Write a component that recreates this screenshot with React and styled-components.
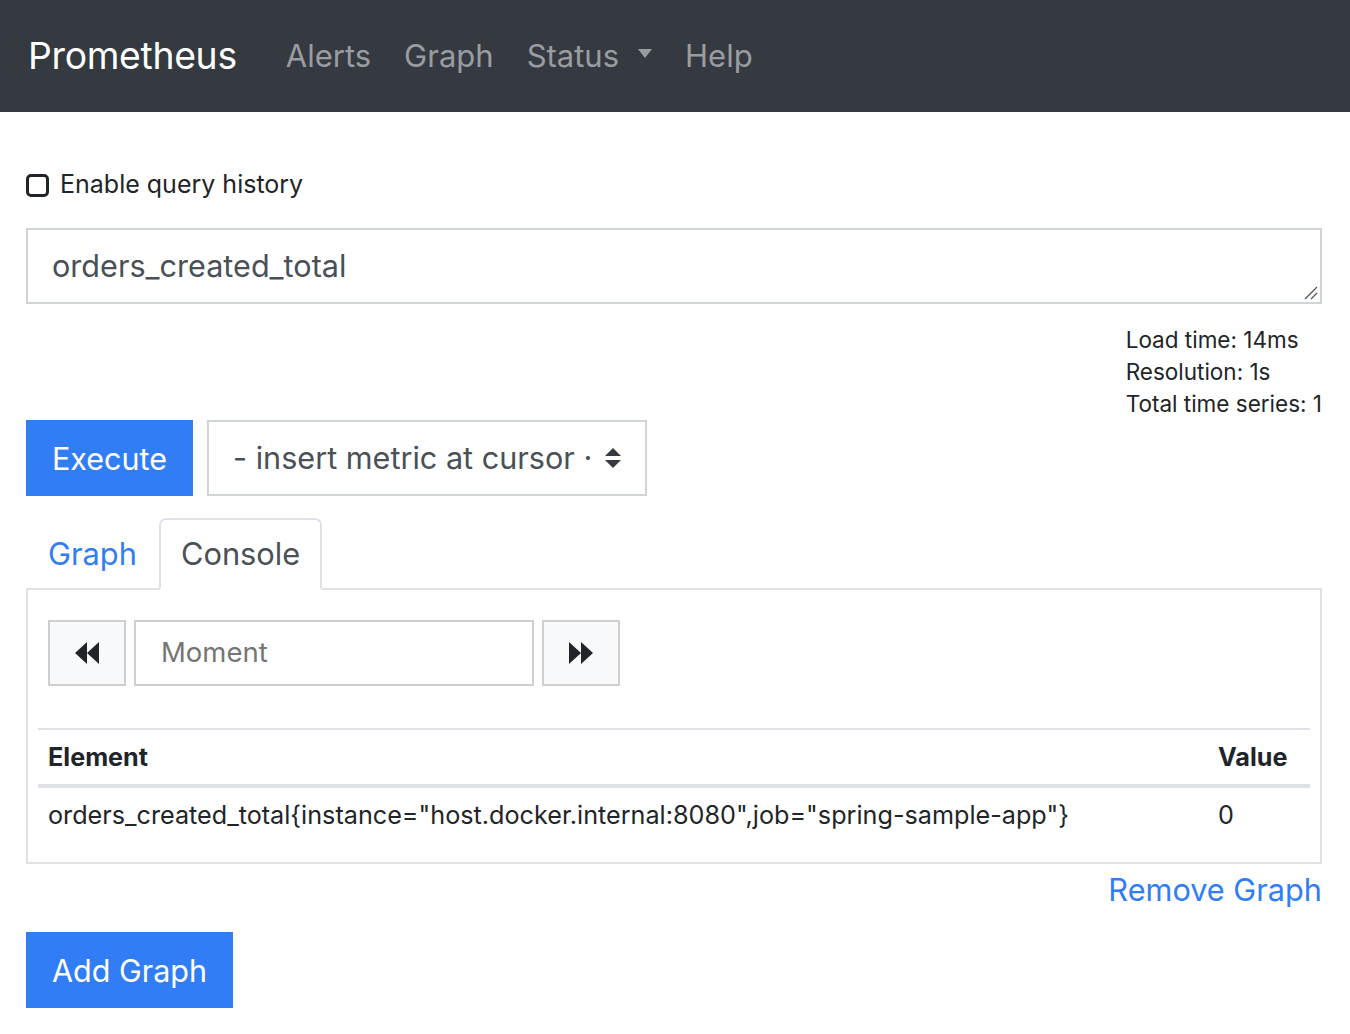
import React from "react";
import styled, { createGlobalStyle } from "styled-components";

const Global = createGlobalStyle`
  html, body { margin: 0; padding: 0; background: #fff; }
  body {
    font-family: Inter, "Noto Sans", "Liberation Sans", sans-serif;
    color: #212529;
    font-size: 25px;
    line-height: 1.5;
  }
  * { box-sizing: border-box; }
`;

const BLUE = "#307df6";

const Navbar = styled.nav`
  height: 112px;
  background: #343a40;
  display: flex;
  align-items: center;
  padding-left: 28px;
`;

const Brand = styled.a`
  color: #fff;
  font-size: 37.3px;
  letter-spacing: -0.3px;
  margin-right: 49px;
  text-decoration: none;
`;

const NavList = styled.div`
  display: flex;
  align-items: center;
  gap: 33px;
`;

const NavLink = styled.a`
  color: #9a9da0;
  font-size: 31px;
  text-decoration: none;
  display: flex;
  align-items: center;
`;

const Caret = styled.span`
  display: inline-block;
  margin-left: 19px;
  width: 0;
  height: 0;
  border-left: 7.5px solid transparent;
  border-right: 7.5px solid transparent;
  border-top: 9px solid #9a9da0;
  margin-top: -6px;
`;

const Main = styled.main`
  padding: 55px 28px 0 26px;
`;

const CheckRow = styled.label`
  display: flex;
  align-items: center;
  gap: 11px;
  height: 36px;
  font-size: 25px;
`;

const CheckBox = styled.span`
  width: 23px;
  height: 23px;
  border: 3px solid #212529;
  border-radius: 5px;
  display: inline-block;
`;

const QueryBox = styled.div`
  margin-top: 25px;
  height: 76px;
  border: 2px solid #ced4da;
  position: relative;
  display: flex;
  align-items: center;
  padding-left: 24px;
  font-size: 30.6px;
  color: #495057;
`;

const Resize = styled.svg`
  position: absolute;
  right: 2px;
  bottom: 2px;
`;

const Stats = styled.div`
  margin-top: 20px;
  display: flex;
  flex-direction: column;
  align-items: flex-end;
  font-size: 22.5px;
  line-height: 32px;
  color: #212529;
`;

const StatBlock = styled.div`
  text-align: left;
`;

const ActionRow = styled.div`
  display: flex;
  gap: 14px;
`;

const PrimaryButton = styled.button`
  height: 76px;
  padding: 0 26px;
  background: ${BLUE};
  color: #fff;
  border: none;
  font-family: inherit;
  font-size: 30.5px;
  cursor: pointer;
`;

const Select = styled.div`
  width: 440px;
  height: 76px;
  border: 2px solid #ced4da;
  display: flex;
  align-items: center;
  justify-content: space-between;
  padding: 0 24px 0 24px;
  font-size: 30.6px;
  color: #495057;
`;

const Tabs = styled.div`
  margin-top: 22px;
  margin-bottom: -2px;
  display: flex;
  height: 72px;
  position: relative;
  z-index: 1;
`;

const Tab = styled.div`
  padding: 0 20px;
  display: flex;
  align-items: center;
  font-size: 30.8px;
  color: ${(p) => (p.$active ? "#495057" : BLUE)};
  border: 2px solid ${(p) => (p.$active ? "#dee2e6" : "transparent")};
  border-bottom-color: ${(p) => (p.$active ? "#fff" : "transparent")};
  border-radius: 7px 7px 0 0;
  background: ${(p) => (p.$active ? "#fff" : "transparent")};
`;

const TabPane = styled.div`
  border: 2px solid #dee2e6;
  padding: 30px 10px 20px 10px;
`;

const TimeRow = styled.div`
  display: flex;
  gap: 8px;
  padding-left: 10px;
`;

const IconButton = styled.div`
  width: 78px;
  height: 66px;
  background: #f8f9fa;
  border: 2px solid #cfcfcf;
  display: flex;
  align-items: center;
  justify-content: center;
`;

const MomentInput = styled.div`
  width: 400px;
  height: 66px;
  border: 2px solid #cfcfcf;
  display: flex;
  align-items: center;
  padding-left: 25px;
  font-size: 27.5px;
  color: #757575;
`;

const Table = styled.table`
  margin-top: 42px;
  width: 100%;
  border-collapse: collapse;
  font-size: 25.2px;
`;

const Th = styled.th`
  text-align: left;
  font-weight: 700;
  padding: 10px 10px;
  line-height: 34px;
  border-top: 2px solid #dee2e6;
  border-bottom: 4px solid #dee2e6;
  width: ${(p) => p.$w || "auto"};
`;

const Td = styled.td`
  padding: 10px 10px;
  line-height: 34px;
`;

const RemoveRow = styled.div`
  display: flex;
  justify-content: flex-end;
  margin-top: 8px;
`;

const TextLink = styled.a`
  color: ${BLUE};
  font-size: 30.7px;
  line-height: 36px;
  text-decoration: none;
`;

const AddRow = styled.div`
  margin-top: 24px;
`;

const Backward = () => (
  <svg width="24" height="22" viewBox="0 0 24 22">
    <path d="M0 11 L12 0 L12 22 Z M12 11 L24 0 L24 22 Z" fill="#212529" />
  </svg>
);

const Forward = () => (
  <svg width="24" height="22" viewBox="0 0 24 22">
    <path d="M24 11 L12 0 L12 22 Z M12 11 L0 0 L0 22 Z" fill="#212529" />
  </svg>
);

const SortArrows = () => (
  <svg width="16" height="20" viewBox="0 0 16 20">
    <path d="M8 0 L16 8 L0 8 Z M0 12 L16 12 L8 20 Z" fill="#343a40" />
  </svg>
);

export default function App() {
  return (
    <>
      <Global />
      <Navbar>
        <Brand>Prometheus</Brand>
        <NavList>
          <NavLink>Alerts</NavLink>
          <NavLink>Graph</NavLink>
          <NavLink>
            Status
            <Caret />
          </NavLink>
          <NavLink>Help</NavLink>
        </NavList>
      </Navbar>
      <Main>
        <CheckRow>
          <CheckBox />
          Enable query history
        </CheckRow>
        <QueryBox>
          orders_created_total
          <Resize width="16" height="16" viewBox="0 0 16 16">
            <path d="M15 3 L3 15 M15 9 L9 15" stroke="#555" strokeWidth="1.3" />
          </Resize>
        </QueryBox>
        <Stats>
          <StatBlock>
            <div>Load time: 14ms</div>
            <div>Resolution: 1s</div>
            <div>Total time series: 1</div>
          </StatBlock>
        </Stats>
        <ActionRow>
          <PrimaryButton>Execute</PrimaryButton>
          <Select>
            <span>- insert metric at cursor ·</span>
            <SortArrows />
          </Select>
        </ActionRow>
        <Tabs>
          <Tab>Graph</Tab>
          <Tab $active>Console</Tab>
        </Tabs>
        <TabPane>
          <TimeRow>
            <IconButton>
              <Backward />
            </IconButton>
            <MomentInput>Moment</MomentInput>
            <IconButton>
              <Forward />
            </IconButton>
          </TimeRow>
          <Table>
            <thead>
              <tr>
                <Th>Element</Th>
                <Th $w="102px">Value</Th>
              </tr>
            </thead>
            <tbody>
              <tr>
                <Td>
                  orders_created_total{"{"}instance="host.docker.internal:8080",job="spring-sample-app"{"}"}
                </Td>
                <Td>0</Td>
              </tr>
            </tbody>
          </Table>
        </TabPane>
        <RemoveRow>
          <TextLink>Remove Graph</TextLink>
        </RemoveRow>
        <AddRow>
          <PrimaryButton>Add Graph</PrimaryButton>
        </AddRow>
      </Main>
    </>
  );
}
